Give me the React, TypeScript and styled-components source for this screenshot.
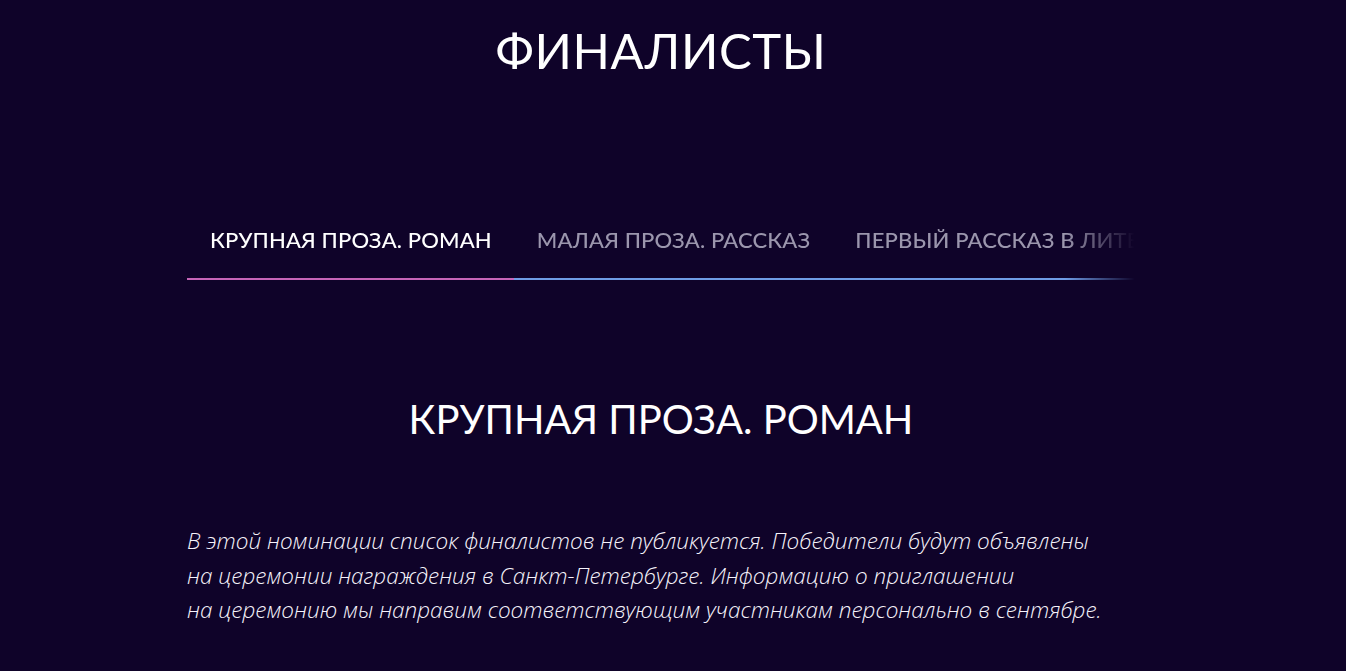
import React from 'react';
import styled, { createGlobalStyle } from 'styled-components';

const GlobalStyle = createGlobalStyle`
  html, body {
    margin: 0;
    padding: 0;
    background: #0f0329;
    color: #ffffff;
    font-family: Lato, 'Open Sans', sans-serif;
    overflow: hidden;
  }
`;

const Page = styled.main`
  width: 948px;
  margin: 0 auto;
  padding-right: 24px;
  box-sizing: content-box;
`;

const Title = styled.h1`
  margin: 0;
  padding-top: 20px;
  font-size: 49px;
  line-height: 60px;
  font-weight: 400;
  text-align: center;
  letter-spacing: 0.6px;
`;

const TabsScroller = styled.div`
  margin-top: 136px;
  overflow: hidden;
  -webkit-mask-image: linear-gradient(to right, #000 calc(100% - 70px), transparent);
  mask-image: linear-gradient(to right, #000 calc(100% - 70px), transparent);
`;

const TabList = styled.div`
  display: flex;
  width: max-content;
  min-width: 100%;
  border-bottom: 2px solid #6f9de6;
`;

const Tab = styled.button<{ $active?: boolean }>`
  flex: none;
  background: none;
  border: none;
  margin-bottom: -2px;
  border-bottom: 2px solid ${p => (p.$active ? '#c765b8' : 'transparent')};
  padding: 10px 22px 24px 23px;
  font-family: Lato, 'Open Sans', sans-serif;
  font-size: 22px;
  font-weight: 500;
  line-height: 28px;
  letter-spacing: 0.15px;
  white-space: nowrap;
  color: ${p => (p.$active ? '#ffffff' : '#9b96ad')};
  cursor: pointer;
`;

const Spacer = styled.div`
  flex: 1;
`;

const SectionTitle = styled.h2`
  margin: 115px 0 0;
  font-size: 40px;
  line-height: 48px;
  font-weight: 400;
  text-align: center;
`;

const Note = styled.p`
  margin: 81px 0 0;
  font-family: 'Open Sans', Lato, sans-serif;
  font-size: 22.5px;
  line-height: 34.5px;
  font-style: italic;
  font-weight: 300;
  color: #f6f3fb;
`;

const tabs = ['КРУПНАЯ ПРОЗА. РОМАН', 'МАЛАЯ ПРОЗА. РАССКАЗ', 'ПЕРВЫЙ РАССКАЗ В ЛИТЕРАТУРЕ'];

export default function App() {
  return (
    <>
      <GlobalStyle />
      <Page>
        <Title>ФИНАЛИСТЫ</Title>
        <TabsScroller>
          <TabList>
            {tabs.map((t, i) => (
              <Tab key={t} $active={i === 0}>{t}</Tab>
            ))}
            <Spacer />
          </TabList>
        </TabsScroller>
        <SectionTitle>КРУПНАЯ ПРОЗА. РОМАН</SectionTitle>
        <Note>
          В этой номинации список финалистов не публикуется. Победители будут объявлены
          <br />
          на церемонии награждения в Санкт-Петербурге. Информацию о приглашении
          <br />
          на церемонию мы направим соответствующим участникам персонально в сентябре.
        </Note>
      </Page>
    </>
  );
}
